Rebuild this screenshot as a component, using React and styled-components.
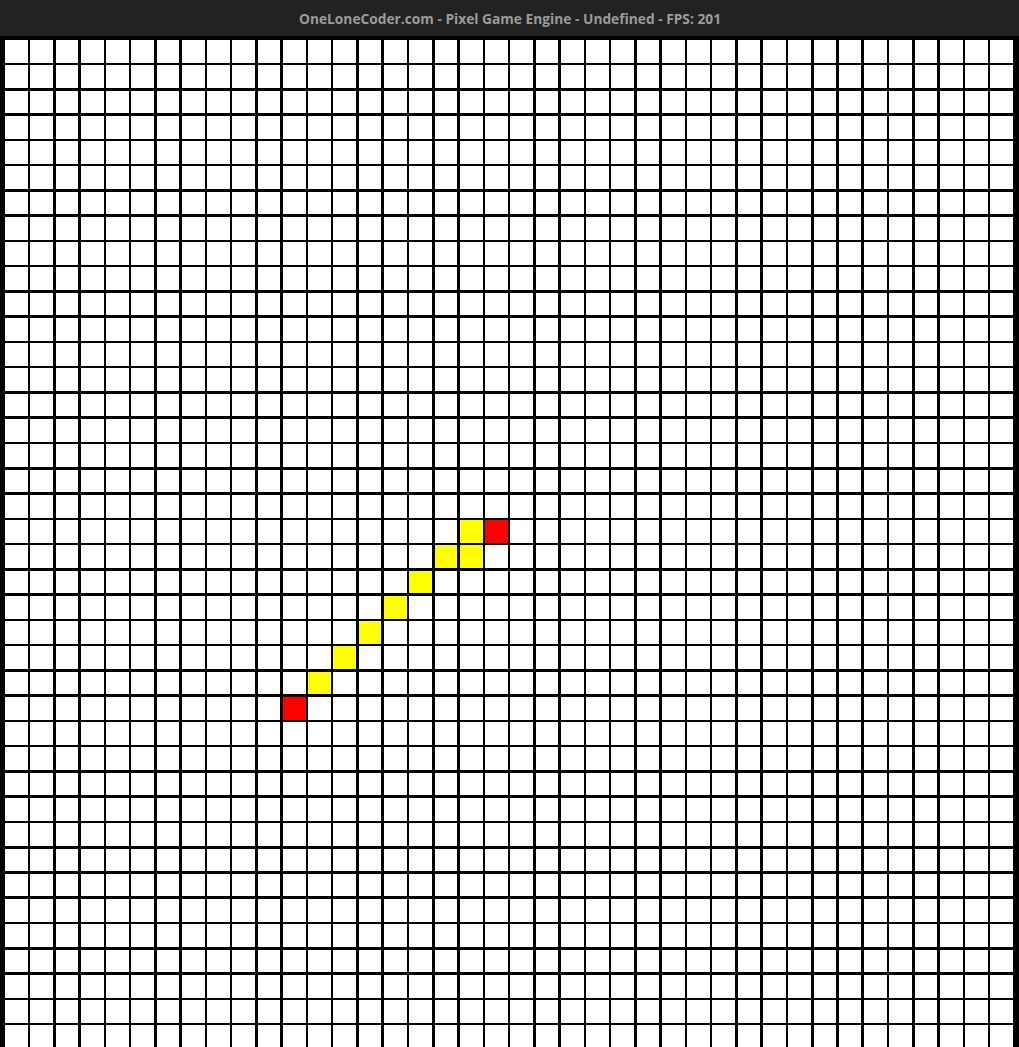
import React from 'react';
import styled, { createGlobalStyle } from 'styled-components';

const GlobalStyle = createGlobalStyle`
  html, body {
    margin: 0;
    padding: 0;
    background: #000;
    overflow: hidden;
  }
`;

const COLS = 40;
const ROWS = 40;

// cells lit up by the line, [col, row]
const LINE = [
  [11, 26, 'end'],
  [12, 25, 'path'],
  [13, 24, 'path'],
  [14, 23, 'path'],
  [15, 22, 'path'],
  [16, 21, 'path'],
  [17, 20, 'path'],
  [18, 20, 'path'],
  [18, 19, 'path'],
  [19, 19, 'end'],
];

const Window = styled.div`
  width: 1019px;
  height: 1047px;
  display: flex;
  flex-direction: column;
  background: #000;
  overflow: hidden;
`;

const TitleBar = styled.div`
  height: 36px;
  flex: none;
  background: #222222;
  display: flex;
  align-items: center;
  justify-content: center;
  padding-left: 1px;
  color: #9b9b9b;
  font-family: "Open Sans", "Noto Sans", sans-serif;
  font-weight: 700;
  font-size: 13.75px;
`;

const Board = styled.div`
  flex: none;
  display: grid;
  grid-template-columns: repeat(${COLS}, 22.73px);
  grid-auto-rows: 22.73px;
  gap: 2.55px;
  padding: 4px 0 0 5px;
  background: #000;
`;

const fills = {
  empty: '#ffffff',
  path: '#ffff00',
  end: '#ff0000',
};

const Cell = styled.div`
  background: ${(p) => fills[p.kind]};
`;

function App() {
  const lit = {};
  LINE.forEach(([c, r, kind]) => {
    lit[r * COLS + c] = kind;
  });

  const cells = [];
  for (let i = 0; i < COLS * ROWS; i++) {
    cells.push(<Cell key={i} kind={lit[i] || 'empty'} />);
  }

  return (
    <>
      <GlobalStyle />
      <Window>
        <TitleBar>OneLoneCoder.com - Pixel Game Engine - Undefined - FPS: 201</TitleBar>
        <Board>{cells}</Board>
      </Window>
    </>
  );
}

export default App;
